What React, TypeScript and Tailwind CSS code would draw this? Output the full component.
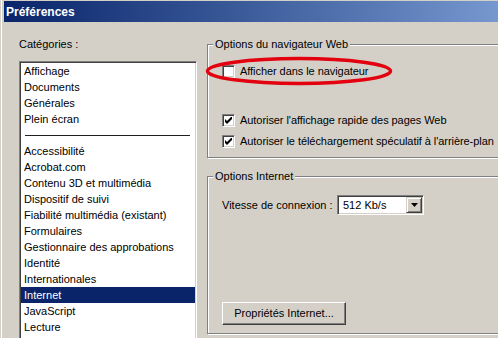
import React from 'react';

const TOP_ITEMS = ['Affichage', 'Documents', 'Générales', 'Plein écran'];
const OTHER_ITEMS = [
  'Accessibilité',
  'Acrobat.com',
  'Contenu 3D et multimédia',
  'Dispositif de suivi',
  'Fiabilité multimédia (existant)',
  'Formulaires',
  'Gestionnaire des approbations',
  'Identité',
  'Internationales',
  'Internet',
  'JavaScript',
  'Lecture',
];

const SUNKEN =
  'border border-t-[#808080] border-l-[#808080] border-r-white border-b-white shadow-[inset_1px_1px_0_#404040,inset_-1px_-1px_0_#d4d0c8] p-[1px]';
const RAISED =
  'border border-t-white border-l-white border-r-[#404040] border-b-[#404040] shadow-[inset_-1px_-1px_0_#808080]';

function Checkbox({ checked }: { checked: boolean }) {
  return (
    <div className={`w-[13px] h-[13px] shrink-0 bg-white flex items-center justify-center ${SUNKEN}`}>
      {checked && (
        <svg width="7" height="7" viewBox="0 0 7 7">
          <polygon points="0,2 2,4 6,0 7,0 7,2 2,7 0,5" fill="#000" />
        </svg>
      )}
    </div>
  );
}

function CheckRow({ checked, label }: { checked: boolean; label: string }) {
  return (
    <div className="flex items-center gap-[5px] h-[13px]">
      <Checkbox checked={checked} />
      <span className="leading-[13px] whitespace-nowrap tracking-[-0.06px]">{label}</span>
    </div>
  );
}

function GroupBox({ title, className, children }: { title: string; className: string; children: React.ReactNode }) {
  return (
    <div
      className={`relative w-[300px] border border-[#808080] shadow-[inset_1px_1px_0_#fff,1px_1px_0_#fff] ${className}`}
    >
      {/* caption sits over the etched line */}
      <span className="absolute -top-[7px] left-[5px] bg-[#d4d0c8] px-[2px] leading-[13px] whitespace-nowrap">
        {title}
      </span>
      {children}
    </div>
  );
}

export default function App() {
  return (
    <div
      className="relative w-[498px] h-[338px] overflow-hidden bg-[#d4d0c8] pl-[4px] pt-[1px] text-[11px] text-black shadow-[inset_1px_0_0_#d4d0c8,inset_2px_0_0_#fff]"
      style={{ fontFamily: '"Liberation Sans", Arial, sans-serif' }}
    >
      {/* Title bar */}
      <div className="h-[21px] flex items-center pl-[2px] bg-linear-to-r from-[#0a246a] to-[#7797cf]">
        <span className="text-white font-bold text-[12px] leading-[14px]">Préférences</span>
      </div>

      <div className="flex items-start">
        {/* Left: categories */}
        <div className="shrink-0 pl-[15px] pt-[16px] w-[203px]">
          <div className="leading-[13px]">Catégories :</div>
          <div className={`mt-[10px] w-[178px] h-[300px] bg-white ${SUNKEN}`}>
            {TOP_ITEMS.map((item) => (
              <div key={item} className="h-[16px] leading-[16px] pl-[3px] whitespace-nowrap">
                {item}
              </div>
            ))}
            <div className="h-[16px] flex items-center pl-[4px] pr-[5px]">
              <div className="h-[1px] w-full bg-[#202020]" />
            </div>
            {OTHER_ITEMS.map((item) => (
              <div
                key={item}
                className={`h-[16px] leading-[16px] pl-[3px] whitespace-nowrap ${
                  item === 'Internet' ? 'bg-[#0a246a] text-white' : ''
                }`}
              >
                {item}
              </div>
            ))}
          </div>
        </div>

        {/* Right: options */}
        <div className="shrink-0 pt-[22px]">
          <GroupBox title="Options du navigateur Web" className="h-[114px] pt-[20px] pl-[14px]">
            <CheckRow checked={false} label="Afficher dans le navigateur" />
            <div className="mt-[36px]">
              <CheckRow checked label="Autoriser l'affichage rapide des pages Web" />
            </div>
            <div className="mt-[8px]">
              <CheckRow checked label="Autoriser le téléchargement spéculatif à l'arrière-plan" />
            </div>
          </GroupBox>

          <GroupBox title="Options Internet" className="mt-[18px] h-[158px] pt-[18px] pl-[14px]">
            <div className="flex items-center h-[20px]">
              <span className="w-[115px] shrink-0 leading-[13px] whitespace-nowrap">Vitesse de connexion :</span>
              <div className={`w-[87px] h-[20px] shrink-0 bg-white flex ${SUNKEN}`}>
                <span className="flex-1 pl-[4px] leading-[16px]">512 Kb/s</span>
                <div className="w-[16px] h-[16px] bg-[#d4d0c8] flex items-center justify-center border border-t-[#d4d0c8] border-l-[#d4d0c8] border-r-[#404040] border-b-[#404040] shadow-[inset_1px_1px_0_#fff,inset_-1px_-1px_0_#808080]">
                  <svg width="7" height="4" viewBox="0 0 7 4">
                    <polygon points="0,0 7,0 3.5,4" fill="#000" />
                  </svg>
                </div>
              </div>
            </div>
            <button className={`mt-[87px] w-[124px] h-[23px] bg-[#d4d0c8] leading-[13px] ${RAISED}`}>
              Propriétés Internet...
            </button>
          </GroupBox>
        </div>
      </div>

      {/* Red hand-drawn annotation ellipse */}
      <svg className="absolute left-[204px] top-[56px]" width="192" height="31" viewBox="0 0 192 31">
        <ellipse cx="95" cy="15" rx="91.5" ry="12.5" fill="none" stroke="#e3000f" strokeWidth="3.5" />
      </svg>
    </div>
  );
}
